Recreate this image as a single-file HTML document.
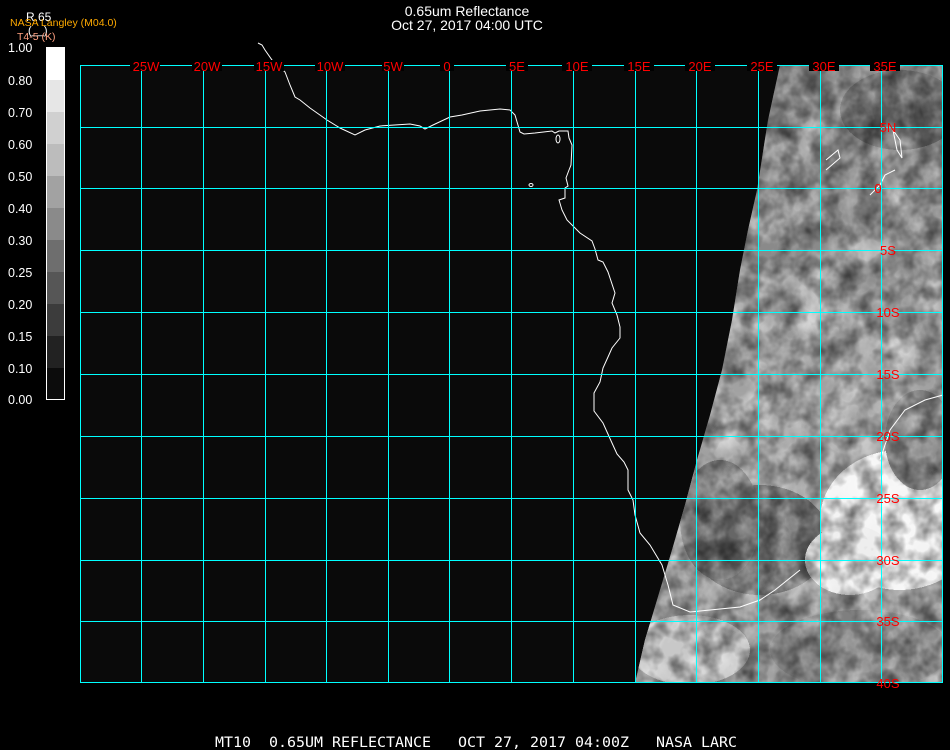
<!DOCTYPE html>
<html><head><meta charset="utf-8"><style>
html,body{margin:0;padding:0;background:#000;width:950px;height:750px;overflow:hidden}
svg{display:block}
text{font-family:"Liberation Sans",sans-serif}
.m{font-family:"DejaVu Sans Mono","Liberation Mono",monospace}
</style></head><body>
<svg width="950" height="750" xmlns="http://www.w3.org/2000/svg" shape-rendering="crispEdges">
<defs>
<filter id="n" x="0" y="0" width="100%" height="100%">
<feTurbulence type="fractalNoise" baseFrequency="0.035 0.03" numOctaves="4" seed="4" result="t"/>
<feColorMatrix type="matrix" values="0 0 0 0 1  0 0 0 0 1  0 0 0 0 1  1.1 0 0 0 -0.35" in="t"/>
</filter>
<filter id="d" x="0" y="0" width="100%" height="100%">
<feTurbulence type="fractalNoise" baseFrequency="0.05" numOctaves="3" seed="9" result="t"/>
<feColorMatrix type="matrix" values="0 0 0 0 0  0 0 0 0 0  0 0 0 0 0  1.1 0 0 0 -0.4" in="t"/>
</filter>
<clipPath id="c"><polygon points="780,65 943,65 943,683 635,683 645,640 660,590 672,550 685,505 697,460 710,415 722,370 732,320 740,270 748,230 757,190 768,120"/></clipPath>
<linearGradient id="g" x1="0" y1="0" x2="0" y2="1">
<stop offset="0" stop-color="#7a7a7a"/><stop offset="0.3" stop-color="#8a8a8a"/><stop offset="0.55" stop-color="#a5a5a5"/><stop offset="1" stop-color="#8a8a8a"/>
</linearGradient>
</defs>
<rect x="80" y="65" width="863" height="618" fill="#0a0a0a"/>
<g clip-path="url(#c)">
<rect x="630" y="65" width="320" height="620" fill="url(#g)"/>
<ellipse cx="760" cy="540" rx="70" ry="55" fill="#555"/>
<ellipse cx="720" cy="520" rx="40" ry="60" fill="#666"/>
<ellipse cx="900" cy="520" rx="80" ry="70" fill="#f4f4f4"/>
<ellipse cx="850" cy="560" rx="45" ry="35" fill="#eee"/>
<ellipse cx="920" cy="440" rx="35" ry="50" fill="#808080"/>
<ellipse cx="900" cy="110" rx="60" ry="40" fill="#5a5a5a"/>
<ellipse cx="690" cy="650" rx="60" ry="35" fill="#c8c8c8"/>
<ellipse cx="860" cy="650" rx="90" ry="40" fill="#7f7f7f"/>
<rect x="630" y="65" width="320" height="620" filter="url(#n)"/>
<rect x="630" y="65" width="320" height="620" filter="url(#d)"/>
</g>
<g fill="none" stroke="#fff" stroke-width="1" shape-rendering="auto">
<polyline points="258,43 262,45 265,50 272,60 285,72 290,85 295,97 300,100 310,108 327,120 340,128 355,135 365,130 380,126 410,124 420,126 425,129 433,125 450,117 462,115 480,111 500,109 510,110 515,115 520,132 524,134 535,133 552,131 555,133 559,131 568,131 569,138 572,145 571,165 569,170 566,178 568,186 565,188 565,198 559,200 562,210 567,220 580,233 592,241 595,249 598,260 603,262 608,272 615,293 612,303 617,315 620,327 620,338 612,348 608,357 603,368 600,382 594,393 594,411 603,423 612,443 617,454 624,462 628,470 628,490 633,500 635,515 640,533 650,545 662,565 668,585 673,605 690,612 710,610 740,607 760,600 775,590 800,570"/>
<polyline points="893,130 897,150 902,158 900,140 893,130"/>
<polyline points="826,160 838,150 840,158 826,170"/>
<polyline points="870,195 880,185 885,175 895,170"/>
<polyline points="880,460 890,430 905,410 925,400 943,395"/>
<ellipse cx="558" cy="139" rx="2" ry="4"/>
<ellipse cx="531" cy="185" rx="2" ry="1.5"/>
</g>
<g stroke="#00ffff" stroke-width="1" fill="none">
<rect x="80.5" y="65.5" width="862" height="617"/>
<path d="M141.5 65V683M203.5 65V683M265.5 65V683M326.5 65V683M388.5 65V683M449.5 65V683M511.5 65V683M573.5 65V683M635.5 65V683M696.5 65V683M758.5 65V683M820.5 65V683M881.5 65V683"/>
<path d="M80 127.5H943M80 188.5H943M80 250.5H943M80 312.5H943M80 374.5H943M80 436.5H943M80 498.5H943M80 560.5H943M80 621.5H943"/>
</g>
<g fill="#000">
<rect x="130" y="60" width="30" height="11"/><rect x="192" y="60" width="30" height="11"/><rect x="254" y="60" width="30" height="11"/><rect x="315" y="60" width="30" height="11"/><rect x="382" y="60" width="22" height="11"/><rect x="440" y="60" width="14" height="11"/><rect x="506" y="60" width="22" height="11"/><rect x="562" y="60" width="30" height="11"/><rect x="624" y="60" width="30" height="11"/><rect x="685" y="60" width="30" height="11"/><rect x="747" y="60" width="30" height="11"/><rect x="809" y="60" width="30" height="11"/><rect x="870" y="60" width="30" height="11"/>
</g>
<g class="m" fill="#ff0000" font-size="13" text-anchor="middle" shape-rendering="auto">
<text x="146" y="71">25W</text><text x="207" y="71">20W</text><text x="269" y="71">15W</text><text x="330" y="71">10W</text><text x="393" y="71">5W</text><text x="447" y="71">0</text><text x="517" y="71">5E</text><text x="577" y="71">10E</text><text x="639" y="71">15E</text><text x="700" y="71">20E</text><text x="762" y="71">25E</text><text x="824" y="71">30E</text><text x="885" y="71">35E</text>
<text x="888" y="132">5N</text><text x="878" y="193">0</text><text x="888" y="255">5S</text><text x="888" y="317">10S</text><text x="888" y="379">15S</text><text x="888" y="441">20S</text><text x="888" y="503">25S</text><text x="888" y="565">30S</text><text x="888" y="626">35S</text><text x="888" y="688">40S</text>
</g>
<g>
<rect x="46" y="47" width="19" height="33" fill="#fff"/>
<rect x="46" y="80" width="19" height="32" fill="#e6e6e6"/>
<rect x="46" y="112" width="19" height="32" fill="#d0d0d0"/>
<rect x="46" y="144" width="19" height="32" fill="#bcbcbc"/>
<rect x="46" y="176" width="19" height="32" fill="#a2a2a2"/>
<rect x="46" y="208" width="19" height="32" fill="#8a8a8a"/>
<rect x="46" y="240" width="19" height="32" fill="#6e6e6e"/>
<rect x="46" y="272" width="19" height="32" fill="#565656"/>
<rect x="46" y="304" width="19" height="32" fill="#3c3c3c"/>
<rect x="46" y="336" width="19" height="32" fill="#222"/>
<rect x="46" y="368" width="19" height="32" fill="#0c0c0c"/>
<rect x="46.5" y="47.5" width="18" height="352" fill="none" stroke="#fff" stroke-width="1"/>
</g>
<g class="m" fill="#fff" font-size="12.5" shape-rendering="auto">
<text x="8" y="52">1.00</text><text x="8" y="85">0.80</text><text x="8" y="117">0.70</text><text x="8" y="149">0.60</text><text x="8" y="181">0.50</text><text x="8" y="213">0.40</text><text x="8" y="245">0.30</text><text x="8" y="277">0.25</text><text x="8" y="309">0.20</text><text x="8" y="341">0.15</text><text x="8" y="373">0.10</text><text x="8" y="404">0.00</text>
<text x="26" y="21" font-size="12">R.65</text>
<text x="28" y="34" font-size="11">(__)</text>
</g>
<g shape-rendering="auto">
<text x="10" y="26" font-size="10.5" fill="#ffaa00">NASA Langley (M04.0)</text>
<text x="17" y="40" font-size="10.5" fill="#ffa080">T4-5 (K)</text>
<text x="467" y="16" font-size="14" fill="#fff" text-anchor="middle">0.65um Reflectance</text>
<text x="467" y="30" font-size="14" fill="#fff" text-anchor="middle">Oct 27, 2017 04:00 UTC</text>
<text class="m" x="215" y="747" font-size="13.8" fill="#fff" xml:space="preserve" textLength="522" lengthAdjust="spacingAndGlyphs">MT10  0.65UM REFLECTANCE   OCT 27, 2017 04:00Z   NASA LARC</text>
</g>
</svg>
</body></html>
